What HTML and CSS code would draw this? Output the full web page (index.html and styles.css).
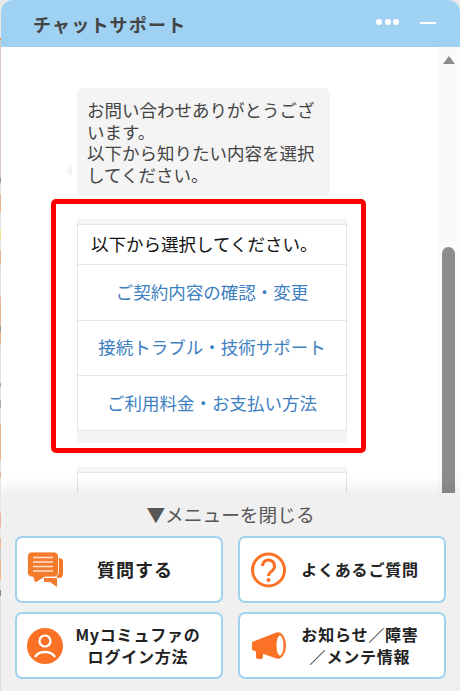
FILE: index.html
```html
<!DOCTYPE html>
<html lang="ja">
<head>
    <meta charset="UTF-8">
    <meta name="viewport" content="width=device-width, initial-scale=1.0">
    <title>チャットサポート</title>
    <link rel="stylesheet" href="styles.css">
</head>
<body>
    <div class="chat">
        <header class="chat-header">
            <h1 class="chat-title">チャットサポート</h1>
            <div class="header-tools">
                <span class="dots"><i></i><i></i><i></i></span>
                <span class="minimize"></span>
            </div>
        </header>

        <div class="chat-body">
            <div class="messages">
                <div class="bubble">お問い合わせありがとうございます。<br>以下から知りたい内容を選択してください。</div>

                <div class="card">
                    <div class="card-inner">
                        <div class="card-title">以下から選択してください。</div>
                        <a class="card-link link-a">ご契約内容の確認・変更</a>
                        <a class="card-link link-b">接続トラブル・技術サポート</a>
                        <a class="card-link link-c">ご利用料金・お支払い方法</a>
                    </div>
                </div>

                <div class="card card-next">
                    <div class="card-inner card-empty"></div>
                </div>
            </div>

            <div class="scrollbar">
                <span class="scroll-up"></span>
                <span class="scroll-thumb"></span>
            </div>

            <div class="highlight"></div>
        </div>

        <div class="menu">
            <div class="menu-close">▼メニューを閉じる</div>
            <div class="menu-grid">
                <a class="menu-btn">
                    <svg class="menu-icon" viewBox="0 0 36 36">
                        <path d="M30 6h2a4 4 0 0 1 4 4v12a4 4 0 0 1-4 4h-2v9l-7-5h-6v-4h13z" fill="#f47a2c"/>
                        <path d="M5 0h22a4.500 4.500 0 0 1 4.500 4.500v16a4.500 4.500 0 0 1-4.500 4.500H18l-10 6-2-6H5a4.500 4.500 0 0 1-4.500-4.500v-16A4.500 4.500 0 0 1 5 0z" fill="#f47a2c" stroke="#fff" stroke-width="0.800"/>
                        <path d="M6 5.500h20M6 10h20M6 14.500h20M6 19h20" stroke="#fde3d2" stroke-width="1.300"/>
                    </svg>
                    <span class="menu-label label-wide">質問する</span>
                </a>
                <a class="menu-btn">
                    <svg class="menu-icon" viewBox="0 0 36 36">
                        <circle cx="18.500" cy="18" r="16" fill="none" stroke="#fb7226" stroke-width="3"/>
                        <path d="M12.500 14a6 6 0 1 1 9.500 4.900c-2.200 1.600-3.500 2.600-3.500 5.100" fill="none" stroke="#fb7226" stroke-width="3"/>
                        <circle cx="18.500" cy="28" r="2" fill="#fb7226"/>
                    </svg>
                    <span class="menu-label">よくあるご質問</span>
                </a>
                <a class="menu-btn">
                    <svg class="menu-icon" viewBox="0 0 36 36">
                        <circle cx="18" cy="18" r="18" fill="#fb7226"/>
                        <circle cx="18" cy="13" r="5.500" fill="none" stroke="#fff" stroke-width="2.200"/>
                        <path d="M8 29c2-3.500 6-5 10-5s8 1.500 10 5" fill="none" stroke="#fff" stroke-width="2.500"/>
                    </svg>
                    <span class="menu-label label-login">Myコミュファの<br>ログイン方法</span>
                </a>
                <a class="menu-btn">
                    <svg class="menu-icon" viewBox="0 0 36 36">
                        <path d="M2 14L25 5c6-3 11 4 11 12.500S31 33 25 30L2 22z" fill="#fb7226"/>
                        <ellipse cx="30" cy="17.500" rx="3.500" ry="10" fill="#fff"/>
                        <path d="M6 22l7 2.500V29a2 2 0 0 1-2 2H8a2 2 0 0 1-2-2z" fill="#fb7226"/>
                    </svg>
                    <span class="menu-label">お知らせ／障害<br>／メンテ情報</span>
                </a>
            </div>
        </div>
    </div>
</body>
</html>
```

FILE: styles.css
```css
* {
    box-sizing: border-box;
}

html, body {
    height: 100%;
}

body {
    margin: 0;
    overflow: hidden;
    font-family: "Noto Sans CJK JP", "Noto Sans", sans-serif;
    /* blurred page behind the widget, only a 1px sliver shows */
    background: linear-gradient(
        #e8e8e8 0 38px, #f08a4a 38px 40px, #d8c8c4 40px 178px, #999 178px 183px,
        #e4e4e4 183px 194px, #eeb595 194px 212px, #e4e4e4 212px 230px, #e8e08a 230px 240px,
        #e4e4e4 240px 250px, #eeb595 250px 265px, #e0e0e0 265px 297px, #eeb595 297px 326px,
        #999 326px 332px, #eeb595 332px 345px, #e0e0e0 345px 383px, #aaa 383px 387px,
        #e0e0e0 387px 400px, #aaa 400px 408px, #e0e0e0 408px 424px, #eeb595 424px 460px,
        #e4e4e4 460px 472px, #eeb595 472px 478px, #e4e4e4 478px 513px, #eeb595 513px 527px,
        #e4e4e4 527px 538px, #eeb595 538px 548px, #ccc 548px 560px, #eeb595 560px 580px,
        #e4e4e4 580px 590px, #888 590px 596px, #e0e0e0 596px
    );
}

.chat {
    display: flex;
    flex-direction: column;
    height: 691px;
    margin-left: 1px;
    background: #fff;
    border-radius: 12px 12px 0 0;
    overflow: hidden;
}

/* header */
.chat-header {
    flex: none;
    height: 47px;
    display: flex;
    align-items: center;
    justify-content: space-between;
    padding: 0 24px 0 32px;
    background-color: #9fd2f2;
}

.chat-title {
    margin: 0;
    font-size: 18px;
    font-weight: 700;
    letter-spacing: 1.200px;
    color: #444;
}

.header-tools {
    display: flex;
    align-items: center;
    gap: 21px;
    margin-bottom: 3px;
}

.dots {
    display: flex;
    gap: 2.500px;
}

.dots i {
    width: 6px;
    height: 6px;
    border-radius: 50%;
    background-color: #fff;
}

.minimize {
    width: 16px;
    height: 2px;
    margin-top: 1px;
    background-color: #fff;
}

/* messages */
.chat-body {
    flex: 1;
    position: relative;
    display: flex;
    min-height: 0;
    overflow: hidden;
}

.messages {
    flex: 1;
    padding: 41px 0 0 76px;
}

.bubble {
    position: relative;
    width: 253px;
    height: 108px;
    padding: 11px 10px;
    font-size: 17.500px;
    line-height: 21.500px;
    color: #444;
    background-color: #f4f4f4;
    border-radius: 6px;
}

.bubble::before {
    content: "";
    position: absolute;
    left: -11px;
    top: 77px;
    border: 6px solid transparent;
    border-left-width: 0;
    border-right-color: #f4f4f4;
}

.card {
    width: 270px;
    margin-top: 23px;
    padding: 5px 0 12px;
    background-color: #f4f4f4;
}

.card-next {
    margin-top: 24px;
}

.card-inner {
    background-color: #fff;
    border: 1px solid #e5e5e5;
}

.card-empty {
    height: 40px;
}

.card-title {
    height: 40px;
    padding: 0 13px;
    font-size: 17.500px;
    line-height: 38px;
    color: #111;
    border-bottom: 1px solid #e5e5e5;
}

.card-link {
    display: block;
    height: 56px;
    font-size: 17.500px;
    line-height: 54px;
    text-align: center;
    color: #3d7fbf;
    border-bottom: 1px solid #e5e5e5;
}

.link-b {
    height: 55px;
    line-height: 52px;
}

.link-c {
    height: 54px;
    border-bottom: 0;
}

/* scrollbar */
.scrollbar {
    flex: none;
    position: relative;
    width: 23px;
    background-color: #fafafa;
}

.scroll-up {
    position: absolute;
    left: 6px;
    top: 9px;
    border: 6px solid transparent;
    border-top-width: 0;
    border-bottom: 8px solid #8c8c8c;
}

.scroll-thumb {
    position: absolute;
    left: 5px;
    top: 200px;
    width: 13px;
    height: 300px;
    border-radius: 7px 7px 0 0;
    background-color: #8c8c8c;
}

.highlight {
    position: absolute;
    left: 50px;
    top: 152px;
    width: 315px;
    height: 254px;
    border: 5px solid #f00;
    border-radius: 5px;
}

/* bottom menu */
.menu {
    flex: none;
    height: 198px;
    padding: 8px 14px 0;
    background-color: #f0f0f0;
    box-shadow: 0 -6px 12px rgba(0, 0, 0, 0.07);
    z-index: 1;
}

.menu-close {
    height: 35px;
    font-size: 18.700px;
    line-height: 26px;
    text-align: center;
    color: #555;
}

.menu-grid {
    display: grid;
    grid-template-columns: 208px 208px;
    grid-auto-rows: 67px;
    gap: 9px 15px;
}

.menu-btn {
    display: flex;
    align-items: center;
    padding: 0 10px;
    background-color: #fff;
    border: 2px solid #a0d2f0;
    border-radius: 7px;
}

.menu-icon {
    flex: none;
    width: 36px;
    height: 36px;
}

.menu-label {
    flex: 1;
    padding-bottom: 1px;
    font-size: 16px;
    font-weight: 700;
    line-height: 22px;
    letter-spacing: 0.800px;
    text-align: center;
    color: #222;
}

.label-wide {
    margin-right: 4px;
    font-size: 18px;
    letter-spacing: 1px;
}

.label-login {
    margin-left: 2px;
}
```
